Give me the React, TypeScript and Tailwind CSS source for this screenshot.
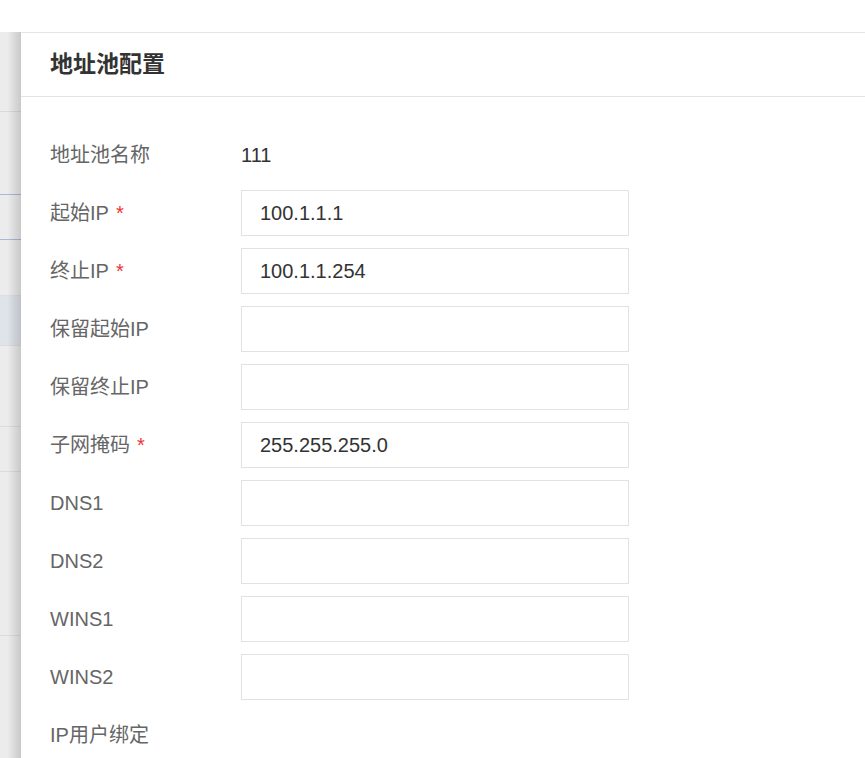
import React from "react"

const font = { fontFamily: '"Liberation Sans", "Noto Sans CJK SC", sans-serif' }

type Field = { label: string; required?: boolean; value?: string; input?: boolean }

const fields: Field[] = [
  { label: "地址池名称", value: "111" },
  { label: "起始IP", required: true, input: true, value: "100.1.1.1" },
  { label: "终止IP", required: true, input: true, value: "100.1.1.254" },
  { label: "保留起始IP", input: true },
  { label: "保留终止IP", input: true },
  { label: "子网掩码", required: true, input: true, value: "255.255.255.0" },
  { label: "DNS1", input: true },
  { label: "DNS2", input: true },
  { label: "WINS1", input: true },
  { label: "WINS2", input: true },
  { label: "IP用户绑定" },
]

function BackdropStrip() {
  // the page behind the drawer, only a thin slice shows
  return (
    <div className="relative flex w-[21px] shrink-0 flex-col bg-[#ececec]">
      <div className="h-[80px] border-b border-[#dadada]" />
      <div className="h-[83px] border-b border-[#a9b9d9]" />
      <div className="h-[45px] border-b border-[#a9b9d9]" />
      <div className="h-[56px] border-b border-[#dedede]" />
      <div className="h-[50px] border-b border-[#dcdcdc] bg-[#dfe3ea]" />
      <div className="h-[81px] border-b border-[#dcdcdc]" />
      <div className="h-[45px] border-b border-[#dcdcdc]" />
      <div className="h-[164px] border-b border-[#dcdcdc]" />
      <div className="flex-1" />
      {/* drawer shadow */}
      <div className="absolute inset-0 bg-linear-to-r from-transparent from-35% to-black/15" />
    </div>
  )
}

function FormRow({ field }: { field: Field }) {
  return (
    <div className="flex h-[46px] items-center">
      <div className="flex w-[191px] shrink-0 items-center text-[20px] text-[#666]">
        <span>{field.label}</span>
        {field.required && <span className="ml-[7px] text-[#e33]">*</span>}
      </div>
      {field.input ? (
        <input
          readOnly
          defaultValue={field.value ?? ""}
          className="h-[46px] w-[388px] border border-[#e2e2e2] bg-white pl-[18px] text-[20px] text-[#333] outline-none"
          style={font}
        />
      ) : (
        <span className="text-[20px] text-[#333]">{field.value}</span>
      )}
    </div>
  )
}

export default function App() {
  return (
    <div className="flex h-[758px] w-[865px] flex-col overflow-hidden bg-white" style={font}>
      <div className="h-8 shrink-0 bg-white" />
      <div className="flex flex-1">
        <BackdropStrip />
        <div className="flex flex-1 flex-col border-t border-[#e6e6e6] bg-white">
          <div className="flex h-[64px] shrink-0 items-center border-b border-[#e3e3e3] px-[29px]">
            <h1 className="text-[23px] font-bold text-[#333]">地址池配置</h1>
          </div>
          <div className="flex flex-col gap-3 px-[29px] pt-[35px]">
            {fields.map((f) => (
              <FormRow key={f.label} field={f} />
            ))}
          </div>
        </div>
      </div>
    </div>
  )
}
